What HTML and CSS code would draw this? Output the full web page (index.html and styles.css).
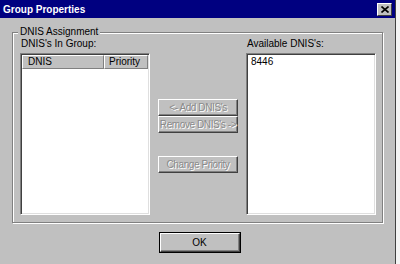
FILE: index.html
```html
<!DOCTYPE html>
<html>

<head>
    <meta charset="UTF-8">
    <title>Group Properties</title>
    <link rel="stylesheet" href="styles.css">
</head>

<body>
    <div class="window">
        <!-- title bar -->
        <div class="titlebar">
            <span class="title">Group Properties</span>
            <span class="close">
                <svg width="8" height="7" viewBox="0 0 8 7">
                    <path d="M0.5 0.5 L7.5 6.5 M7.5 0.5 L0.5 6.5" stroke="#000" stroke-width="1.6" />
                </svg>
            </span>
        </div>

        <fieldset class="group">
            <legend>DNIS Assignment</legend>
            <div class="cols">
                <div class="col">
                    <label>DNIS's In Group:</label>
                    <div class="listbox">
                        <div class="header">
                            <span class="hcell first">DNIS</span>
                            <span class="hcell second">Priority</span>
                        </div>
                    </div>
                </div>

                <div class="actions">
                    <button type="button" class="btn" disabled>&lt;- Add DNIS's</button>
                    <button type="button" class="btn" disabled>Remove DNIS's -&gt;</button>
                    <button type="button" class="btn spaced" disabled>Change Priority</button>
                </div>

                <div class="col">
                    <label>Available DNIS's:</label>
                    <div class="listbox">
                        <div class="item">8446</div>
                    </div>
                </div>
            </div>
        </fieldset>

        <div class="footer">
            <button type="button" class="btn ok">OK</button>
        </div>
    </div>
</body>

</html>
```

FILE: styles.css
```css
body {
    margin: 0;
    background-color: #f4f4f4;
    font-family: "Liberation Sans", Arial, sans-serif;
    font-size: 10px;
}

.window {
    width: 395px;
    height: 264px;
    background-color: #c0c0c0;
    border-right: 1px solid #404040;
    overflow: hidden;
}

.titlebar {
    height: 18px;
    background-color: #000080;
    display: flex;
    align-items: center;
    justify-content: space-between;
    padding: 0 3px 0 3px;
}

.title {
    color: #FFFFFF;
    font-weight: bold;
    font-size: 10px;
}

.close {
    width: 13px;
    height: 11px;
    background-color: #c0c0c0;
    border-top: 1px solid #FFFFFF;
    border-left: 1px solid #FFFFFF;
    border-right: 1px solid #404040;
    border-bottom: 1px solid #404040;
    display: flex;
    align-items: center;
    justify-content: center;
}

.group {
    margin: 8px 0 0 12px;
    width: 356px;
    height: 195px;
    padding: 0 6px 0 7px;
    border: 1px solid #808080;
    box-shadow: inset 1px 1px #FFFFFF, 1px 1px #FFFFFF;
}

.group legend {
    margin-left: -2px;
    padding: 0 2px;
    line-height: 12px;
    background-color: #c0c0c0;
    color: #000000;
}

.cols {
    display: flex;
    justify-content: space-between;
}

.col {
    display: flex;
    flex-direction: column;
}

.col label {
    line-height: 12px;
    margin-left: 1px;
    margin-bottom: 3px;
}

.listbox {
    width: 126px;
    height: 158px;
    background-color: #FFFFFF;
    border-top: 1px solid #808080;
    border-left: 1px solid #808080;
    border-right: 1px solid #FFFFFF;
    border-bottom: 1px solid #FFFFFF;
    box-shadow: inset 1px 1px #404040, inset -1px -1px #dfdfdf;
    padding: 1px;
}

.header {
    display: flex;
    height: 14px;
}

.hcell {
    background-color: #c0c0c0;
    border-top: 1px solid #FFFFFF;
    border-left: 1px solid #FFFFFF;
    border-right: 1px solid #808080;
    border-bottom: 1px solid #808080;
    line-height: 12px;
    padding-left: 5px;
}

.hcell.first {
    width: 75px;
}

.hcell.second {
    flex: 1;
    padding-left: 4px;
}

.item {
    padding: 1px 0 0 3px;
    line-height: 12px;
}

.actions {
    display: flex;
    flex-direction: column;
    padding-top: 61px;
}

.btn {
    width: 80px;
    height: 17px;
    padding: 0;
    white-space: nowrap;
    font-family: "Liberation Sans", Arial, sans-serif;
    font-size: 10px;
    letter-spacing: -0.4px;
    background-color: #c0c0c0;
    border-top: 1px solid #FFFFFF;
    border-left: 1px solid #FFFFFF;
    border-right: 1px solid #404040;
    border-bottom: 1px solid #404040;
    box-shadow: inset -1px -1px #808080;
    color: #000000;
}

.btn:disabled {
    color: #8a8a8a;
    text-shadow: 1px 1px #FFFFFF;
}

.btn.spaced {
    margin-top: 23px;
}

.footer {
    display: flex;
    justify-content: center;
    padding-top: 10px;
    padding-left: 4px;
}

.btn.ok {
    height: 19px;
    letter-spacing: 0;
    outline: 1px solid #000000;
}
```
